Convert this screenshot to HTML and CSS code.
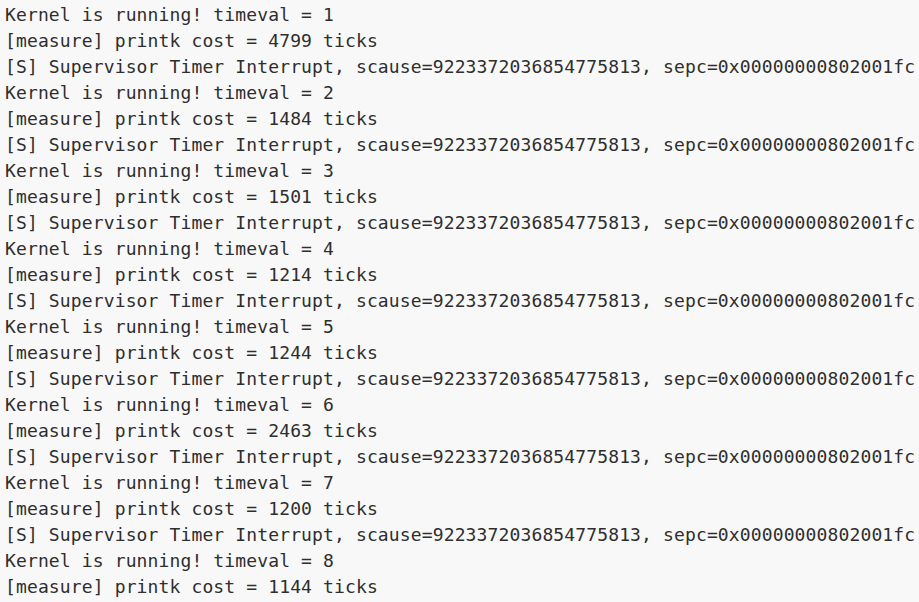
FILE: index.html
```html
<!DOCTYPE html>
<html>
<head>
<meta charset="utf-8">
<link rel="stylesheet" href="styles.css">
</head>
<body>
<pre class="log">Kernel is running! timeval = 1
[measure] printk cost = 4799 ticks
[S] Supervisor Timer Interrupt, scause=9223372036854775813, sepc=0x00000000802001fc
Kernel is running! timeval = 2
[measure] printk cost = 1484 ticks
[S] Supervisor Timer Interrupt, scause=9223372036854775813, sepc=0x00000000802001fc
Kernel is running! timeval = 3
[measure] printk cost = 1501 ticks
[S] Supervisor Timer Interrupt, scause=9223372036854775813, sepc=0x00000000802001fc
Kernel is running! timeval = 4
[measure] printk cost = 1214 ticks
[S] Supervisor Timer Interrupt, scause=9223372036854775813, sepc=0x00000000802001fc
Kernel is running! timeval = 5
[measure] printk cost = 1244 ticks
[S] Supervisor Timer Interrupt, scause=9223372036854775813, sepc=0x00000000802001fc
Kernel is running! timeval = 6
[measure] printk cost = 2463 ticks
[S] Supervisor Timer Interrupt, scause=9223372036854775813, sepc=0x00000000802001fc
Kernel is running! timeval = 7
[measure] printk cost = 1200 ticks
[S] Supervisor Timer Interrupt, scause=9223372036854775813, sepc=0x00000000802001fc
Kernel is running! timeval = 8
[measure] printk cost = 1144 ticks</pre>
</body>
</html>
```
FILE: styles.css
```css
html, body {
  margin: 0;
  padding: 0;
  background: #f8f8f8;
  height: 100%;
  overflow: hidden;
}
.log {
  margin: 0;
  padding: 2px 0 0 5px;
  font-family: "DejaVu Sans Mono", monospace;
  font-size: 18px;
  letter-spacing: 0.13px;
  line-height: 26px;
  color: #2e2e2e;
  white-space: pre;
}
```
